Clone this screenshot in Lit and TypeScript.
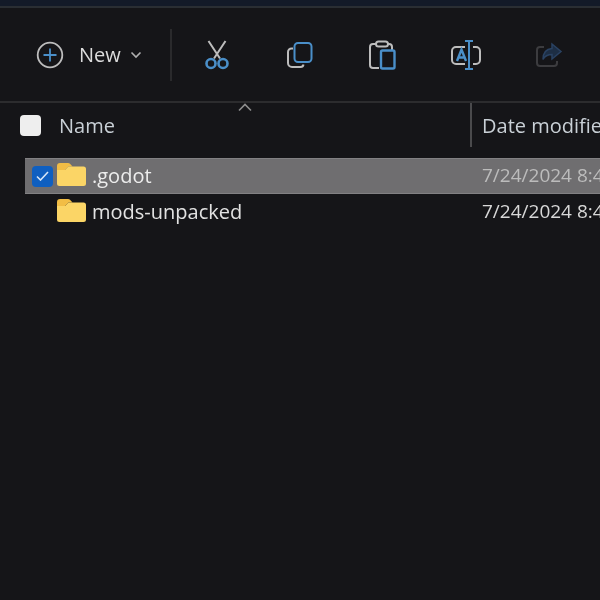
import { LitElement, html, css } from "lit";
import { customElement } from "lit/decorators.js";

const folder = html`<svg class="folder" width="29" height="24" viewBox="0 0 29 24">
  <path d="M0 4 a3 3 0 0 1 3-3 h8 a3 3 0 0 1 2 .8 l2.500 2.700 h-4 l-3.500 3.500 h-8z" fill="#f2bd45"/>
  <path d="M0 8 h8 l3.500-3.500 h15 a2.500 2.500 0 0 1 2.500 2.500 v14.500 a2.500 2.500 0 0 1-2.500 2.500 h-24 a2.500 2.500 0 0 1-2.500-2.500z" fill="#fbd566"/>
</svg>`;

const G = "#bdbdbd";
const B = "#4a8fc9";

@customElement("app-root")
export class AppRoot extends LitElement {
  static styles = css`
    :host { display: block; width: 600px; height: 600px; overflow: hidden; background: #151518; font-family: "Open Sans", "Noto Sans", sans-serif; color: #e4e4e4; }
    .page { position: relative; width: 600px; height: 600px; filter: blur(0.45px); }
    .strip { height: 6px; background: #131a28; border-bottom: 2px solid #2a2e33; }
    .toolbar { height: 95px; box-sizing: border-box; display: flex; align-items: center; padding: 0 0 0 36px; border-bottom: 2px solid #2c2c2e; }
    .new { display: flex; align-items: center; width: 134px; flex: none; }
    .new span { font-size: 20px; margin: 0 9px 0 15px; color: #dcdcdc; line-height: 24px; }
    .sep { width: 2px; height: 52px; background: #2a2a2c; flex: none; margin-right: 3px; }
    .btn { width: 83px; flex: none; display: flex; justify-content: center; align-items: center; }
    .head { height: 44px; display: flex; align-items: center; padding-left: 20px; font-size: 20px; color: #c9d0d6; }
    .check { width: 21px; height: 21px; background: #eeeeee; border-radius: 4px; flex: none; margin-right: 18px; }
    .name { width: 411px; flex: none; }
    .col { width: 2px; height: 44px; background: #4a4a4c; flex: none; margin-right: 10px; }
    .clip { white-space: nowrap; }
    .rows { padding: 11px 0 0 25px; display: flex; flex-direction: column; gap: 0; }
    .row { height: 36px; display: flex; align-items: center; font-size: 20px; white-space: nowrap; }
    .row.sel { background: #6f6e70; border-top: 1px solid #828183; border-bottom: 1px solid #828183; box-sizing: border-box; }
    .box { width: 21px; height: 21px; border-radius: 4px; background: #0f5fc0; display: flex; align-items: center; justify-content: center; flex: none; margin-left: 7px; }
    .spacer { width: 28px; flex: none; }
    .folder { flex: none; margin: 0 6px 0 4px; position: relative; top: -2px; }
    .label { width: 390px; flex: none; color: #e2e2e2; position: relative; top: -1px; }
    .date { color: #d8d8d8; font-size: 19px; position: relative; top: -1px; }
    .sel .date { color: #bcbcbc; }
    .sel .label { color: #ededed; }
    .chev { position: absolute; left: 238px; top: 103px; }
  `;

  render() {
    return html`<div class="page">
      <div class="strip"></div>
      <div class="toolbar">
        <div class="new">
          <svg width="28" height="28" viewBox="0 0 28 28" fill="none">
            <circle cx="14" cy="14" r="12.300" stroke="${G}" stroke-width="1.800"/>
            <path d="M14 7.500v13M7.500 14h13" stroke="${B}" stroke-width="1.800"/>
          </svg>
          <span>New</span>
          <svg width="12" height="8" viewBox="0 0 12 8" fill="none"><path d="M1.500 1.500 6 6l4.500-4.500" stroke="#b0b0b0" stroke-width="1.600"/></svg>
        </div>
        <div class="sep"></div>
        <div class="btn">
          <svg width="26" height="30" viewBox="0 0 26 30" fill="none">
            <path d="M4.500 1 16 18.500M21.500 1 10 18.500" stroke="${G}" stroke-width="2"/>
            <circle cx="7" cy="23.500" r="4.500" stroke="${B}" stroke-width="2.600"/>
            <circle cx="19" cy="23.500" r="4.500" stroke="${B}" stroke-width="2.600"/>
          </svg>
        </div>
        <div class="btn">
          <svg width="26" height="26" viewBox="0 0 26 26" fill="none">
            <path d="M6 6.500H4.500a3.500 3.500 0 0 0-3.500 3.500v11a4 4 0 0 0 4 4h8.500a3 3 0 0 0 3-2.500" stroke="${G}" stroke-width="2"/>
            <rect x="7.500" y="1" width="17" height="19" rx="3.500" stroke="${B}" stroke-width="2"/>
          </svg>
        </div>
        <div class="btn">
          <svg width="27" height="30" viewBox="0 0 27 30" fill="none">
            <path d="M7 4H4a3 3 0 0 0-3 3v18a3 3 0 0 0 3 3h6M19 4h1a3 3 0 0 1 3 3v3" stroke="${G}" stroke-width="2"/>
            <rect x="7" y="1.500" width="12" height="5" rx="2.500" stroke="${G}" stroke-width="2"/>
            <rect x="12" y="10.500" width="13.500" height="18" rx="1.500" stroke="${B}" stroke-width="2.400"/>
          </svg>
        </div>
        <div class="btn">
          <svg width="30" height="30" viewBox="0 0 30 30" fill="none">
            <path d="M14 7H5a4 4 0 0 0-4 4v9a4 4 0 0 0 4 4h9M22 7h3a4 4 0 0 1 4 4v9a4 4 0 0 1-4 4h-3" stroke="${G}" stroke-width="2"/>
            <path d="M14 1h8M14 29h8M18 1v28" stroke="${B}" stroke-width="2"/>
            <path d="M6 21 10.500 9.500 15 21M7.500 17.500h6" stroke="${B}" stroke-width="2.400"/>
          </svg>
        </div>
        <div class="btn">
          <svg width="28" height="26" viewBox="0 0 28 26" fill="none">
            <path d="M9 5H5a3 3 0 0 0-3 3v13a3 3 0 0 0 3 3h14a3 3 0 0 0 3-3v-2" stroke="#3c3c3f" stroke-width="2"/>
            <path d="M17 2l9 7.500-9 7.500v-4.500c-4 0-7 1-9 5 0-6 3-10.500 9-11z" fill="#1d2e44" stroke="#2a4262" stroke-width="1.500"/>
          </svg>
        </div>
      </div>
      <svg class="chev" width="14" height="9" viewBox="0 0 14 9" fill="none"><path d="M1 7.500 7 1.500l6 6" stroke="#8e8e8e" stroke-width="1.600"/></svg>
      <div class="head">
        <div class="check"></div>
        <div class="name">Name</div>
        <div class="col"></div>
        <div class="clip">Date modified</div>
      </div>
      <div class="rows">
        <div class="row sel">
          <div class="box">
            <svg width="13" height="10" viewBox="0 0 13 10" fill="none"><path d="M1 5.500 4.500 9 12 1" stroke="#d7e6f7" stroke-width="1.600"/></svg>
          </div>
          ${folder}
          <div class="label">.godot</div>
          <div class="date">7/24/2024 8:45 PM</div>
        </div>
        <div class="row">
          <div class="spacer"></div>
          ${folder}
          <div class="label">mods-unpacked</div>
          <div class="date">7/24/2024 8:45 PM</div>
        </div>
      </div>
    </div>`;
  }
}
